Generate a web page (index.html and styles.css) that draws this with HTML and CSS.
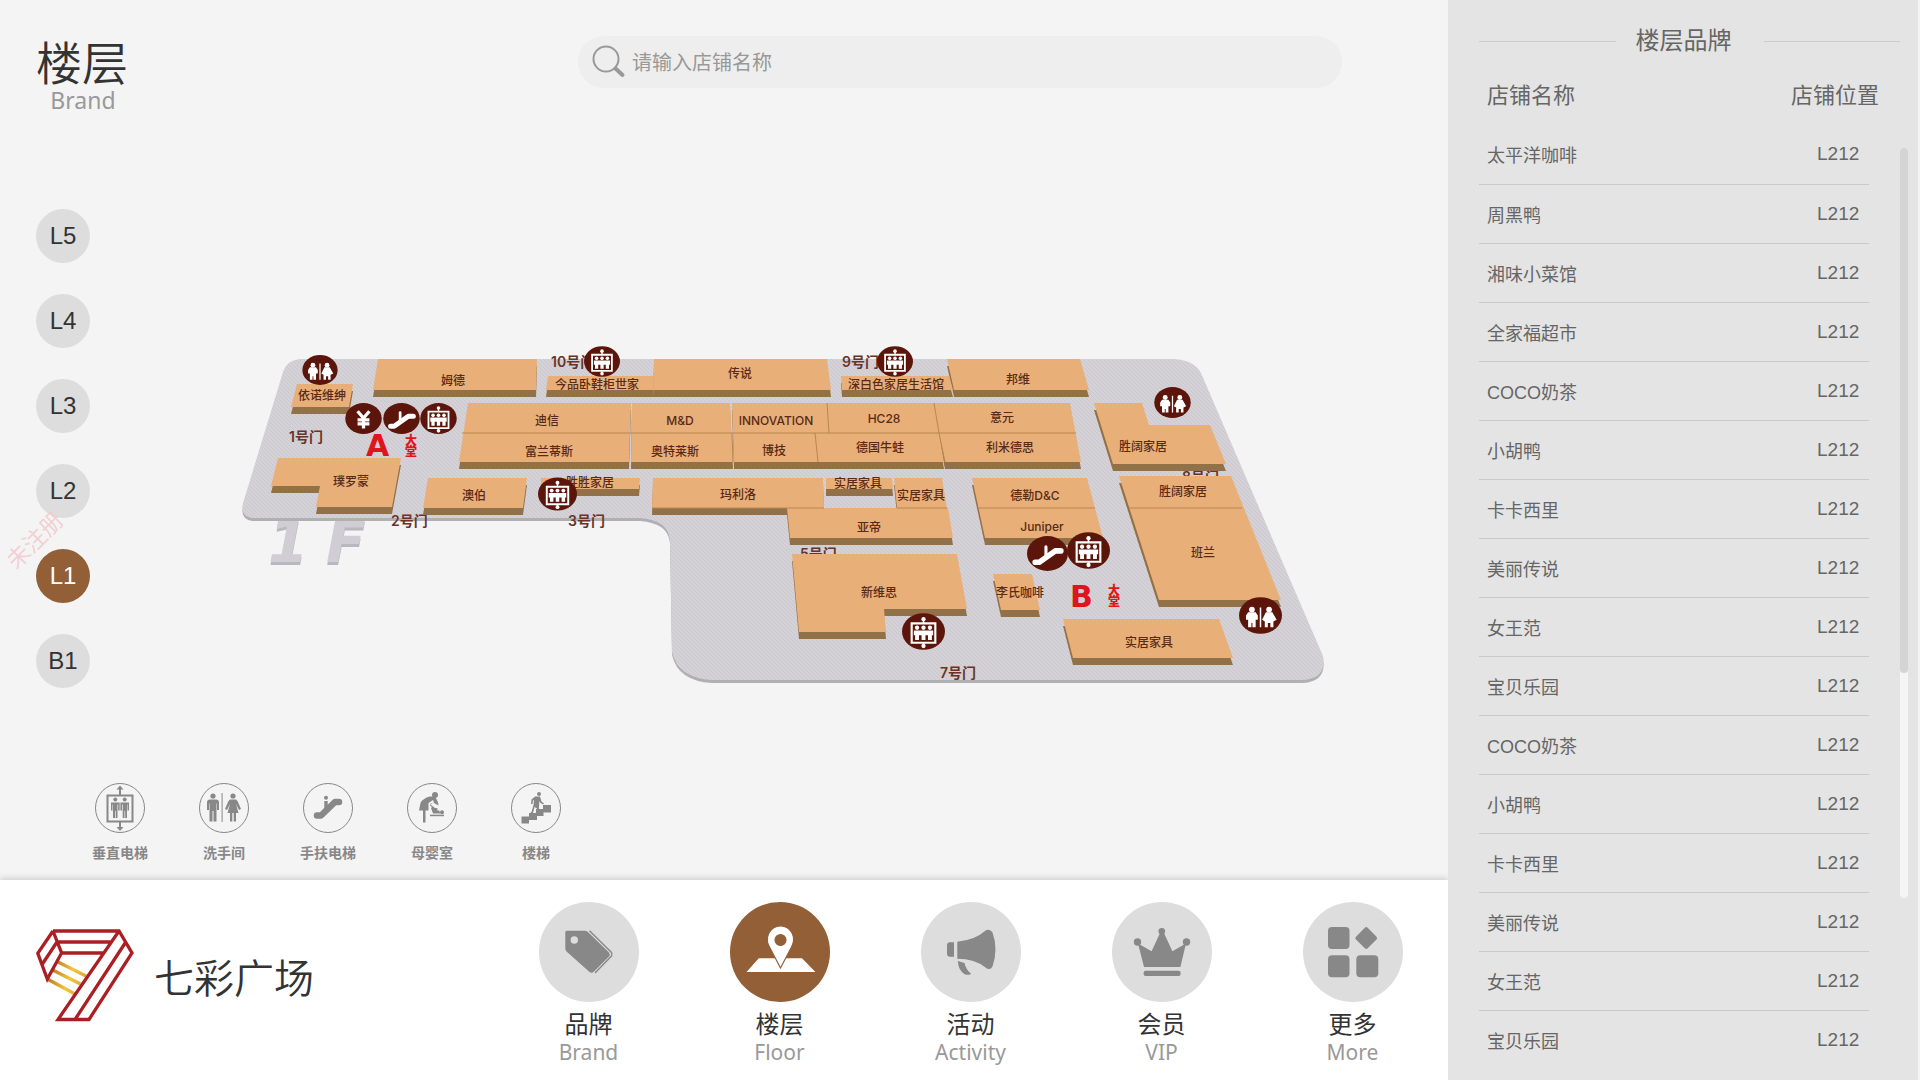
FILE: index.html
```html
<!DOCTYPE html>
<html lang="zh-CN">
<head>
<meta charset="utf-8">
<title>七彩广场</title>
<link rel="stylesheet" href="styles.css">
</head>
<body>
<div class="app">
  <div class="stage">
    <header class="top">
      <div class="heading">
        <h1>楼层</h1>
        <p>Brand</p>
      </div>
      <form class="search" role="search">
        <svg viewBox="0 0 34 34" aria-hidden="true"><circle cx="14" cy="14" r="12.5" fill="none" stroke="#999" stroke-width="2"/><path d="M23.500 23.500L30.500 30" stroke="#999" stroke-width="4" stroke-linecap="round"/></svg>
        <input type="text" placeholder="请输入店铺名称" aria-label="请输入店铺名称">
      </form>
    </header>

    <main class="middle">
      <nav class="floors">
        <button type="button">L5</button>
        <button type="button">L4</button>
        <button type="button">L3</button>
        <button type="button">L2</button>
        <button type="button" class="active">L1</button>
        <button type="button">B1</button>
        <span class="watermark">未注册</span>
      </nav>
      <svg class="map" viewBox="230 330 1130 370" role="img" aria-label="1F">
        <defs>
          <pattern id="hatch" width="4" height="4" patternUnits="userSpaceOnUse"><rect width="4" height="4" fill="#d4d2d7"/><path d="M0 0L4 4" stroke="#cac8ce" stroke-width="1"/></pattern>
          <symbol id="m-lift" viewBox="0 0 40 34">
            <ellipse cx="20" cy="17" rx="20" ry="17" fill="#5c150b"/>
            <path d="M9 9.500H31V27.500H9Z" fill="none" stroke="#fff" stroke-width="2"/>
            <path d="M20 9V5M20 28v3" stroke="#fff" stroke-width="1.500"/>
            <circle cx="20" cy="5.500" r="2" fill="#fff"/><circle cx="20" cy="30.500" r="2" fill="#fff"/>
            <g fill="#fff"><circle cx="14" cy="13.500" r="2"/><circle cx="20" cy="13.500" r="2"/><circle cx="26" cy="13.500" r="2"/><path d="M11 16h18v4.500h-1.200V25h-3.600v-4.500h-2.400V25h-3.600v-4.500h-2.400V25h-3.600v-4.500H11Z"/></g>
          </symbol>
          <symbol id="m-wc" viewBox="0 0 40 34">
            <ellipse cx="20" cy="17" rx="20" ry="17" fill="#5c150b"/>
            <g fill="#fff"><circle cx="12" cy="11.500" r="2.700"/><circle cx="28" cy="11.500" r="2.700"/><path d="M8.500 14h7l2 3v4h-2v7h-3v-4h-1v4h-3v-7h-2v-4ZM25 14h6l4 7-3 1.500V28h-2.800v-4h-2.400v4H24v-5.500L21.500 21ZM19.300 9.500h1.400V28h-1.400Z"/></g>
          </symbol>
          <symbol id="m-esc" viewBox="0 0 40 34">
            <ellipse cx="20" cy="17" rx="20" ry="17" fill="#5c150b"/>
            <path d="M8 25.500h4L27.500 14.500H33" fill="none" stroke="#fff" stroke-width="5.500" stroke-linecap="round" stroke-linejoin="round"/>
            <path d="M18.500 18V10.500" stroke="#fff" stroke-width="3" stroke-linecap="round"/>
          </symbol>
          <symbol id="m-yen" viewBox="0 0 40 34">
            <ellipse cx="20" cy="17" rx="20" ry="17" fill="#5c150b"/>
            <path d="M13.500 9L20 16.500L26.500 9M20 16V28M13.500 18.500h13M13.500 23h13" fill="none" stroke="#fff" stroke-width="3.600"/>
          </symbol>
        </defs>
        <text class="level" x="268" y="562">1</text>
        <text class="level" x="326" y="562">F</text>
        <path class="ground" fill="url(#hatch)" d="M300 359H1172Q1193 359 1201 373L1323 656Q1327 678 1303 680H712Q678 678 672 652L670 540Q668 520 640 518H252Q240 516 243 503L283 372Q287 360 300 359Z"/>
        <g class="door">
          <text x="551" y="367">10号门</text><text x="842" y="367">9号门</text><text x="289" y="442">1号门</text>
          <text x="391" y="526">2号门</text><text x="568" y="526">3号门</text><text x="800" y="559">5号门</text>
          <text x="1182" y="482">8号门</text><text x="940" y="678">7号门</text>
        </g>
        <g class="shops">
          <path d="M297 384H353L349 407H291Z"/>
          <path d="M378 359H537L536 390H373Z"/>
          <path d="M548 376H653V390H546Z"/>
          <path d="M654 359H827L831 390H653Z"/>
          <path d="M841 376H949L953 390H842Z"/>
          <path d="M947 359H1080L1089 390H954Z"/>
          <path d="M468 403H631L629 462H459Z"/>
          <path d="M632 403H730L733 462H631Z"/>
          <path d="M732 403H1070L1081 462H945L939 433L944 462H734Z"/>
          <path d="M278 458H401L392 507H316L320 486H271Z"/>
          <path d="M428 478H527L523 508H423Z"/>
          <path d="M541 478H640L639 489H541Z"/>
          <path d="M653 478H823L824 508H652Z"/>
          <path d="M826 478H892L893 489H826Z"/>
          <path d="M894 478H942L947 508H897Z"/>
          <path d="M787 508H948L953 538H790Z"/>
          <path d="M792 554H957L967 609H884L886 632H799Z"/>
          <path d="M972 478H1087L1103 538H985Z"/>
          <path d="M1094 403H1142L1149 425H1210L1226 464H1113Z"/>
          <path d="M1119 476H1231L1281 600H1159Z"/>
          <path d="M993 574H1032L1040 610H1001Z"/>
          <path d="M1063 619H1219L1233 658H1073Z"/>
        </g>
        <path class="seam" d="M462 433H1076M827 403L829 433M934 403L939 433L945 462M815 433L818 462M732 433L733 462M652 508H824M897 508H947M979 508H1095M1129 508H1242"/>
        <g class="shop-name">
          <text x="322" y="400">依诺维绅</text><text x="453" y="385">姆德</text><text x="597" y="389">今品卧鞋柜世家</text>
          <text x="740" y="378">传说</text><text x="896" y="389">深白色家居生活馆</text><text x="1018" y="384">邦维</text>
          <text x="547" y="425">迪信</text><text x="680" y="425">M&amp;D</text><text x="776" y="425">INNOVATION</text><text x="884" y="423">HC28</text><text x="1002" y="422">意元</text>
          <text x="549" y="456">富兰蒂斯</text><text x="675" y="456">奥特莱斯</text><text x="774" y="455">博技</text><text x="880" y="452">德国牛蛙</text><text x="1010" y="452">利米德思</text>
          <text x="351" y="486">璞罗蒙</text><text x="474" y="500">澳伯</text><text x="590" y="487">胜胜家居</text><text x="738" y="499">玛利洛</text>
          <text x="858" y="488">实居家具</text><text x="921" y="500">实居家具</text><text x="869" y="532">亚帝</text><text x="879" y="597">新维思</text>
          <text x="1035" y="500">德勒D&amp;C</text><text x="1042" y="531">Juniper</text><text x="1143" y="451">胜阔家居</text><text x="1183" y="496">胜阔家居</text>
          <text x="1203" y="557">班兰</text><text x="1020" y="597">李氏咖啡</text><text x="1149" y="647">实居家具</text>
        </g>
        <g class="hall">
          <text class="hall-letter" x="366" y="456">A</text><text x="405" y="445">大</text><text x="405" y="456">堂</text>
          <text class="hall-letter" x="1070" y="607">B</text><text x="1108" y="595">大</text><text x="1108" y="606">堂</text>
        </g>
        <use href="#m-wc" x="302" y="355" width="36" height="30"/>
        <use href="#m-yen" x="345" y="403" width="37" height="31"/>
        <use href="#m-esc" x="383" y="403" width="37" height="31"/>
        <use href="#m-lift" x="420" y="403" width="37" height="31"/>
        <use href="#m-lift" x="584" y="346" width="36" height="31"/>
        <use href="#m-lift" x="538" y="477" width="39" height="34"/>
        <use href="#m-lift" x="877" y="346" width="36" height="31"/>
        <use href="#m-wc" x="1154" y="387" width="37" height="31"/>
        <use href="#m-esc" x="1027" y="536" width="41" height="35"/>
        <use href="#m-lift" x="1067" y="532" width="43" height="37"/>
        <use href="#m-wc" x="1239" y="597" width="43" height="37"/>
        <use href="#m-lift" x="902" y="613" width="43" height="37"/>
      </svg>
    </main>

    <ul class="legend">
      <li><svg viewBox="0 0 50 50" aria-hidden="true"><circle class="ring" cx="25" cy="25" r="24.500"/><path d="M12.500 12.500H37.500V38.500H12.500Z" fill="none" stroke="#888" stroke-width="2"/><path d="M25 12V5M25 39v6" stroke="#888" stroke-width="2"/><path d="M25 2.500l3.500 4h-7ZM25 48l3.500-4h-7Z"/><circle cx="20.300" cy="16.500" r="2"/><circle cx="29.700" cy="16.500" r="2"/><path d="M16 19.500h8.700v8h-1.500v-6H22.500V35H20.700v-7H20v7H18v-13.500h-.5v6H16ZM25.400 19.500H34v8h-1.500v-6H32V35h-1.800v-7h-.7v7h-1.800v-13.500H27v6h-1.600Z"/></svg><span>垂直电梯</span></li>
      <li><svg viewBox="0 0 50 50" aria-hidden="true"><circle class="ring" cx="25" cy="25" r="24.500"/><path d="M22.600 10h1V39h-1Z"/><circle cx="14" cy="13" r="2.600"/><circle cx="34" cy="13" r="2.600"/><path d="M11 16.500h6q3 0 3 3V27h-2v-6.500h-.5V38.500H14.500V28h-1V38.500H10.500V20.500H10V27H8V19.500q0-3 3-3ZM31 16.500h6l1.500 1.500 3.500 8-2 1-3-6 2.500 9H37v8.500H34.700V30h-1.400v8.500H31V30h-2.500L31 21l-3 6-2-1 3.500-8Z"/></svg><span>洗手间</span></li>
      <li><svg viewBox="0 0 50 50" aria-hidden="true"><circle class="ring" cx="25" cy="25" r="24.500"/><path d="M14 32.500h4L32 19h4" fill="none" stroke="#888" stroke-width="6.500" stroke-linecap="round" stroke-linejoin="round"/><circle cx="23" cy="14.800" r="2"/><path d="M21.300 18h3.400v7h-3.400Z"/></svg><span>手扶电梯</span></li>
      <li><svg viewBox="0 0 50 50" aria-hidden="true"><circle class="ring" cx="25" cy="25" r="24.500"/><circle cx="28" cy="12" r="3"/><path d="M22.500 13.500Q15 16 13.500 20L12 27.500h4V39.500h2.500V27.500h3V20l4.500-3 1 2.500-3.500 2 4.500 3.500 2.500.3-.2 2.200h2l1 3H26l-2-5.500 1-1-2-1.500.5-2 3.500-.5 4.500 2.500-.5-3q-2-6-5-6Z"/><circle cx="35" cy="29.300" r="2"/><path d="M23 31.700H37V33.200H23Z"/></svg><span>母婴室</span></li>
      <li><svg viewBox="0 0 50 50" aria-hidden="true"><circle class="ring" cx="25" cy="25" r="24.500"/><path d="M10.500 33.500h7.500v-3.500h7v-4h7v-4h8v7.500h-7.500v3.500h-6.500v4H18v3.500h-7.500Z"/><circle cx="28" cy="11" r="2"/><path d="M24 13.500h5l1.500 5 2.500 2-1 1-3-2-.5-2-.5 6v7h-2V25.500L23.500 24 22 30l-3 2.500L18 31l2.500-2 2-7 .5-5-1 .5-.5 3.500h-1.500l.5-4.500Z"/></svg><span>楼梯</span></li>
    </ul>

    <footer class="bottom">
      <a class="logo" href="#">
        <svg viewBox="0 0 98 95" aria-hidden="true">
          <defs><linearGradient id="gold" gradientUnits="userSpaceOnUse" x1="12" y1="45" x2="46" y2="58"><stop offset="0" stop-color="#b9711d"/><stop offset=".6" stop-color="#f3c53c"/><stop offset="1" stop-color="#e0ad35"/></linearGradient></defs>
          <path d="M11.300 51L39 66M16.700 42L44.400 56M22 34L50 48" stroke="url(#gold)" stroke-width="3.500" fill="none"/>
          <path d="M17 3H83L96 25L53 91.500H22L83 3M89.500 14.500L39 91.500M21 14H76M25.600 25H68M17 3L1.800 25.300L11.300 51L25.600 25L17 3M6.400 36L21 14" stroke="#ab1f24" stroke-width="3.300" fill="none"/>
        </svg>
        <span>七彩广场</span>
      </a>
      <nav class="tabs">
        <a href="#"><svg viewBox="0 0 100 100" aria-hidden="true"><path fill-rule="evenodd" d="M28 28.700H46Q48 28.700 49.500 30.500L70 50.500Q71.500 52.500 70 54.500L54.500 70Q52.500 71.500 50.500 70L27.500 49.500Q26.300 48 26.300 46V30Q26.300 28.700 28 28.700ZM35.300 34.300A3.700 3.700 0 1 0 35.300 41.700A3.700 3.700 0 1 0 35.300 34.300Z"/><path d="M50.500 28.700L72.500 50.500Q73.500 52.500 72.500 54L56 71" fill="none" stroke="#888" stroke-width="1.400"/></svg><strong>品牌</strong><span>Brand</span></a>
        <a href="#" class="active"><svg viewBox="0 0 100 100" aria-hidden="true"><path d="M28.800 56.300H72L85.400 70H16.500Z"/><path stroke="#925f36" stroke-width="1.200" fill-rule="evenodd" d="M50.500 66L39.500 45Q36.800 40 37.500 37A13 13 0 0 1 63.500 37Q64 40 61.500 45ZM50.500 32.500A5.500 5.500 0 1 0 50.500 43.500A5.500 5.500 0 1 0 50.500 32.500Z"/></svg><strong>楼层</strong><span>Floor</span></a>
        <a href="#"><svg viewBox="0 0 100 100" aria-hidden="true"><path d="M33 40.300V54.700H29Q26 54.700 26 51.500V43.500Q26 40.300 29 40.300ZM36.300 39.700Q54 38 64 29Q68.500 26 71.500 30.500Q77.500 47 71.500 64.500Q69 69 64.500 65.500Q54 57 36.300 56.800ZM36.800 59L43.500 61Q45 68 50 71.500Q49.500 73.500 44 72.500Q37.500 69 36.800 59Z"/></svg><strong>活动</strong><span>Activity</span></a>
        <a href="#"><svg viewBox="0 0 100 100" aria-hidden="true"><circle cx="25.500" cy="40" r="3.700"/><circle cx="49.800" cy="29.300" r="3.300"/><circle cx="74.500" cy="40" r="3.700"/><path d="M32 65L26 41.500L39.600 49.300L48.500 30H51.500L60.400 49.300L74 41.500L68.400 65Z"/><rect x="31.600" y="68.700" width="37" height="5.300" rx="2"/></svg><strong>会员</strong><span>VIP</span></a>
        <a href="#"><svg viewBox="0 0 100 100" aria-hidden="true"><rect x="25" y="25" width="21.500" height="22" rx="4"/><rect x="25" y="53.300" width="21.500" height="22" rx="4"/><rect x="53.300" y="53.300" width="22" height="22" rx="4"/><rect x="55" y="27.800" width="16.500" height="16.500" rx="2" transform="rotate(45 63.250 36.050)"/></svg><strong>更多</strong><span>More</span></a>
      </nav>
    </footer>
  </div>

  <aside class="brands">
    <h2>楼层品牌</h2>
    <div class="list">
      <table>
        <thead><tr><th scope="col">店铺名称</th><th scope="col">店铺位置</th></tr></thead>
        <tbody>
          <tr><td>太平洋咖啡</td><td>L212</td></tr>
          <tr><td>周黑鸭</td><td>L212</td></tr>
          <tr><td>湘味小菜馆</td><td>L212</td></tr>
          <tr><td>全家福超市</td><td>L212</td></tr>
          <tr><td>COCO奶茶</td><td>L212</td></tr>
          <tr><td>小胡鸭</td><td>L212</td></tr>
          <tr><td>卡卡西里</td><td>L212</td></tr>
          <tr><td>美丽传说</td><td>L212</td></tr>
          <tr><td>女王范</td><td>L212</td></tr>
          <tr><td>宝贝乐园</td><td>L212</td></tr>
          <tr><td>COCO奶茶</td><td>L212</td></tr>
          <tr><td>小胡鸭</td><td>L212</td></tr>
          <tr><td>卡卡西里</td><td>L212</td></tr>
          <tr><td>美丽传说</td><td>L212</td></tr>
          <tr><td>女王范</td><td>L212</td></tr>
          <tr><td>宝贝乐园</td><td>L212</td></tr>
        </tbody>
      </table>
      <div class="scrollbar"><div class="thumb"></div></div>
    </div>
  </aside>
</div>
</body>
</html>
```

FILE: styles.css
```css
* { box-sizing: border-box; }

body {
  margin: 0;
  background: #f4f4f4;
  color: #333;
  font-family: "Noto Sans", "Noto Sans CJK SC", sans-serif;
}

h1, h2, p, ul { margin: 0; padding: 0; font-weight: 400; }

a { color: inherit; text-decoration: none; }

.app { display: flex; min-height: 100vh; padding-right: 2px; }

.stage { flex: 1; min-width: 0; display: flex; flex-direction: column; }

/* header */
.top { display: flex; align-items: flex-start; padding: 36px 106px 0 36px; }

.heading { flex: 0 0 542px; }
.heading h1 {
  font-family: "Noto Sans CJK SC", sans-serif;
  font-weight: 350;
  font-size: 46px;
  line-height: 48px;
}
.heading p { width: 94px; font-size: 23px; line-height: 32px; text-align: center; color: #999; }

.search {
  flex: 1;
  display: flex;
  align-items: center;
  gap: 6px;
  height: 52px;
  padding: 0 14px;
  border-radius: 26px;
  background: #eee;
}
.search svg { width: 34px; height: 34px; }
.search input {
  flex: 1;
  height: 50px;
  padding: 0 0 2px;
  border: 0;
  outline: 0;
  background: none;
  font: 20px "Noto Sans CJK SC", sans-serif;
  color: #666;
}
.search input::placeholder { color: #999; }

/* floor picker and map */
.middle { display: flex; align-items: flex-start; gap: 140px; padding: 93px 88px 0 36px; }

.floors { position: relative; display: flex; flex-direction: column; gap: 31px; }
.floors button {
  width: 54px;
  height: 54px;
  padding: 0;
  border: 0;
  border-radius: 50%;
  background: #ddd;
  color: #333;
  font: 24px "Liberation Sans", sans-serif;
}
.floors .active { background: #925f36; color: #fff; }

.watermark {
  position: absolute;
  left: -37px;
  top: 313px;
  font: 23px/34px "Noto Sans CJK SC", sans-serif;
  white-space: nowrap;
  color: #f0c8cb;
  opacity: .8;
  transform: rotate(-45deg);
}

.map { flex: 1; min-width: 0; margin-top: 121px; overflow: visible; }
.map text { font-family: Inter, "Noto Sans CJK SC", sans-serif; }
.map .level { font-family: "DejaVu Sans", sans-serif; font-size: 58px; font-weight: 700; font-style: italic; fill: #d0ced4; filter: drop-shadow(0 3px 0 #b9b8be); }
.ground { filter: drop-shadow(0 3px 0 #b0afb4); }
.shops { fill: #e8af78; filter: drop-shadow(0 7px 0 #927048); }
.seam { fill: none; stroke: #b98652; stroke-width: 1; }
.door text { font-size: 14px; font-weight: 600; fill: #6b3328; }
.shop-name text { font-size: 12px; font-weight: 500; fill: #5a2a16; text-anchor: middle; }
.hall text { font-size: 12px; font-weight: 900; fill: #e0141c; }
.hall .hall-letter { font-family: "DejaVu Sans", sans-serif; font-size: 30px; }

/* facility legend */
.legend { display: flex; margin-top: auto; padding: 0 0 17px 68px; list-style: none; }
.legend li { width: 104px; display: flex; flex-direction: column; align-items: center; gap: 8px; }
.legend svg { width: 50px; height: 50px; fill: #888; }
.legend .ring { fill: none; stroke: #888; stroke-width: 1; }
.legend span { font: 700 14px/22px "Noto Sans CJK SC", sans-serif; color: #888; }

/* bottom bar */
.bottom {
  display: flex;
  align-items: flex-start;
  height: 200px;
  background: #fff;
  box-shadow: 0 -2px 6px rgba(0, 0, 0, .15);
}
.logo { display: flex; align-items: center; gap: 20px; padding: 48px 0 0 36px; }
.logo svg { width: 98px; height: 95px; }
.logo span { font: 350 40px/60px "Noto Sans CJK SC", sans-serif; }

.tabs { display: flex; margin-left: auto; padding-top: 22px; }
.tabs a { width: 191px; display: flex; flex-direction: column; align-items: center; }
.tabs svg { width: 100px; height: 100px; border-radius: 50%; background: #ddd; fill: #888; }
.tabs .active svg { background: #925f36; fill: #fff; }
.tabs strong { margin-top: 5px; font: 24px/32px "Noto Sans CJK SC", sans-serif; }
.tabs span { font-size: 21px; line-height: 26px; color: #999; }

/* brand list */
.brands { width: 470px; padding: 0 18px 0 31px; background: #e4e4e4; color: #666; font-family: "Liberation Sans", "Noto Sans CJK SC", sans-serif; }
.brands h2 { display: flex; align-items: center; height: 66px; padding-top: 16px; font-size: 24px; line-height: 36px; }
.brands h2::before, .brands h2::after { content: ""; flex: 1; height: 1px; background: #ccc; }
.brands h2::before { margin-right: 20px; }
.brands h2::after { margin-left: 32px; }

.list { display: flex; align-items: flex-start; }
.brands table { width: 390px; table-layout: fixed; border-collapse: collapse; }
.brands tr { height: 59px; }
.brands th, .brands td { padding: 0 0 0 8px; text-align: left; white-space: nowrap; }
.brands th { padding-bottom: 6px; font-size: 22px; font-weight: 400; }
.brands td { font-size: 18px; border-bottom: 1px solid #c9c9c9; }
.brands th:last-child { width: 78px; padding-left: 0; }
.brands td:last-child { padding-left: 26px; font-size: 19px; }
.brands tr:last-child td { border-bottom: 0; }

.scrollbar { width: 8px; height: 750px; margin: 82px -8px 0 auto; border-radius: 4px; background: #f5f5f5; }
.thumb { height: 70%; border-radius: 4px; background: #d4d4d4; }
```
